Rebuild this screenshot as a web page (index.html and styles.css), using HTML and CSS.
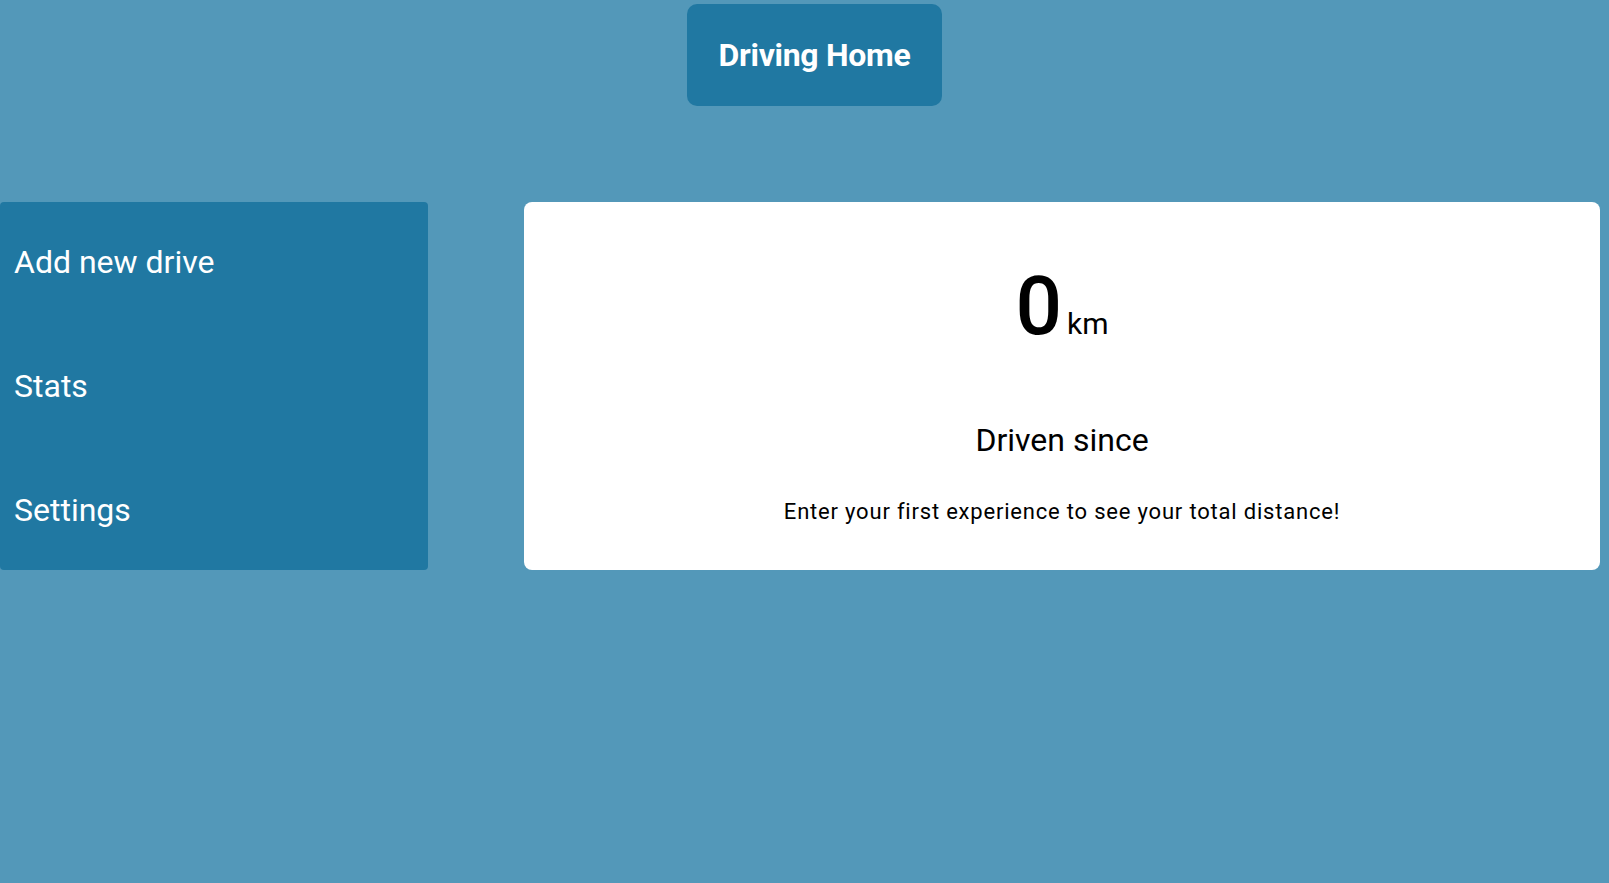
FILE: index.html
```html
<!DOCTYPE html>
<html lang="en">
<head>
<meta charset="utf-8">
<title>Driving Home</title>
<link rel="stylesheet" href="styles.css">
</head>
<body>
<header class="top">
  <div class="brand">Driving Home</div>
</header>
<main class="layout">
  <nav class="sidebar">
    <a class="nav-item" href="#">Add new drive</a>
    <a class="nav-item" href="#">Stats</a>
    <a class="nav-item" href="#">Settings</a>
  </nav>
  <section class="card">
    <div class="distance"><span class="value">0</span><span class="unit">km</span></div>
    <h2 class="since">Driven since</h2>
    <p class="hint">Enter your first experience to see your total distance!</p>
  </section>
</main>
</body>
</html>
```
FILE: styles.css
```css
html, body {
  margin: 0;
  padding: 0;
}
body {
  background: #5398b9;
  font-family: Roboto, "Liberation Sans", sans-serif;
  min-height: 883px;
}
.top {
  display: flex;
  justify-content: center;
  padding: 4px 0 0 20px;
}
.brand {
  background: #2078a2;
  color: #ffffff;
  font-weight: 700;
  font-size: 32px;
  padding: 32px 32px;
  border-radius: 10px;
  letter-spacing: -0.3px;
}
.layout {
  display: grid;
  grid-template-columns: 428px 1076px;
  column-gap: 96px;
  margin-top: 96px;
}
.sidebar {
  background: #2078a2;
  border-radius: 4px;
  display: flex;
  flex-direction: column;
  gap: 86px;
  padding: 41px 14px 41px;
}
.nav-item {
  color: #ffffff;
  text-decoration: none;
  font-size: 32px;
}
.card {
  background: #ffffff;
  border-radius: 8px;
  display: flex;
  flex-direction: column;
  align-items: center;
  padding-top: 55px;
  color: #000000;
}
.distance {
  display: flex;
  align-items: baseline;
  height: 98px;
}
.value {
  font-size: 82px;
  font-weight: 500;
  line-height: 98px;
}
.unit {
  font-size: 30px;
  margin-left: 5px;
}
.since {
  margin: 66px 0 0;
  font-size: 32px;
  font-weight: 400;
}
.hint {
  margin: 40px 0 0;
  font-size: 22px;
  letter-spacing: 0.8px;
}
```
